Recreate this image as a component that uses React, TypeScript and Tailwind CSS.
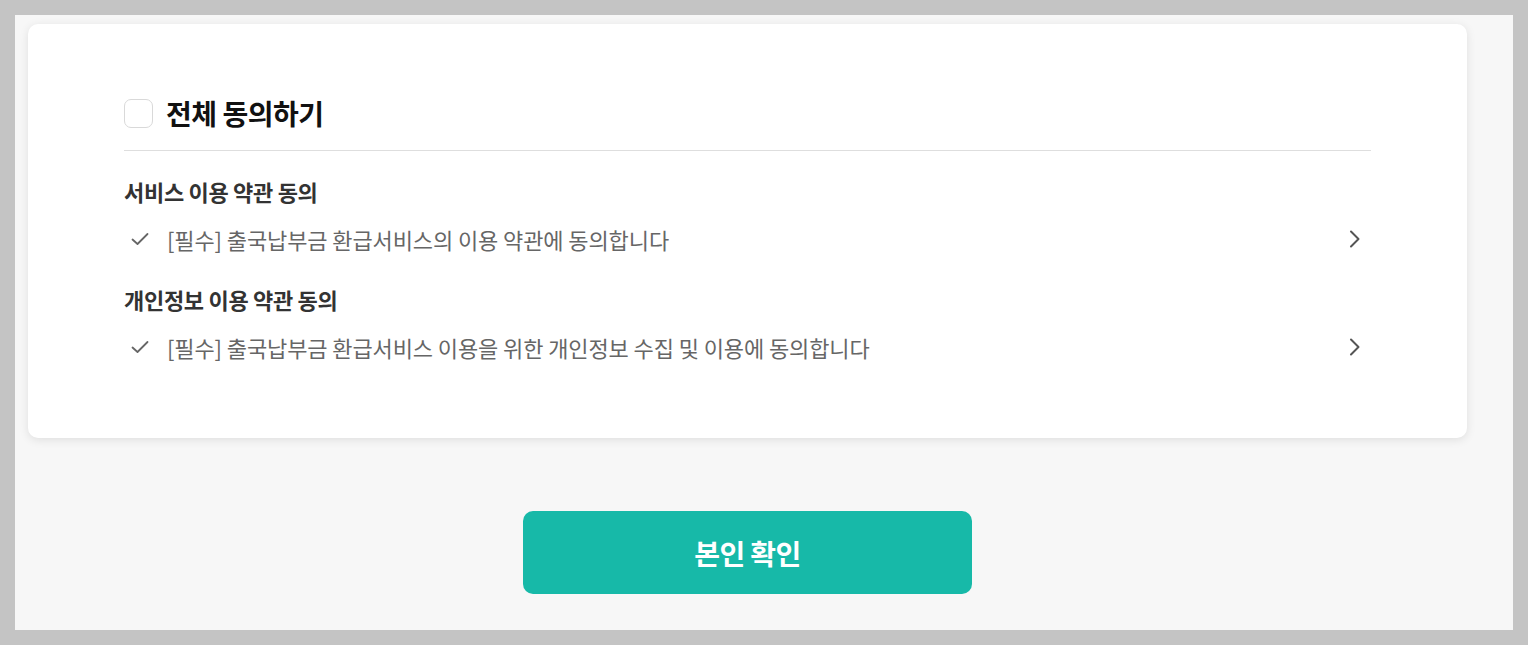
import React from "react";

const font = { fontFamily: '"Noto Sans CJK KR", "Noto Sans", sans-serif' };

function Check() {
  return (
    <svg width="20" height="20" viewBox="0 0 20 20" fill="none" className="shrink-0">
      <path d="M2.5 10.5 L7.5 15 L17.5 5" stroke="#666" strokeWidth="1.8" strokeLinecap="round" strokeLinejoin="round" />
    </svg>
  );
}

function Chevron() {
  return (
    <svg width="12" height="18" viewBox="0 0 12 18" fill="none" className="shrink-0">
      <path d="M2 1.5 L9.5 9 L2 16.5" stroke="#555" strokeWidth="2" strokeLinecap="round" strokeLinejoin="round" />
    </svg>
  );
}

function Item({ text }: { text: string }) {
  return (
    <div className="flex h-[26px] items-center">
      <div className="ml-[6px] flex w-[37px] items-center">
        <Check />
      </div>
      <div className="flex-1 text-[22px] leading-[26px] tracking-[-0.1px] text-[#666]">{text}</div>
      <div className="mr-[10px]">
        <Chevron />
      </div>
    </div>
  );
}

export default function App() {
  return (
    <div className="h-[645px] w-[1528px] bg-[#c4c4c4] p-[15px]" style={font}>
      <div className="h-[615px] bg-[#f7f7f7] pl-[13px] pr-[46px] pt-[9px]">
        <div className="flex w-[1439px] flex-col items-center">
          <div className="h-[414px] w-full rounded-[10px] bg-white px-[96px] pt-[75px] shadow-[0_2px_10px_rgba(0,0,0,0.10)]">
            <div className="flex h-[29px] items-center">
              <div className="h-[29px] w-[29px] rounded-[7px] border border-[#d9d9d9] bg-white" />
              <div className="ml-[13px] text-[28px] font-bold leading-[29px] tracking-[-0.5px] text-[#111]">
                전체 동의하기
              </div>
            </div>
            <div className="mt-[22px] h-px bg-[#dedede]" />
            <div className="mt-[27px] text-[22px] font-bold leading-[26px] tracking-[-0.3px] text-[#333]">
              서비스 이용 약관 동의
            </div>
            <div className="mt-[22px]">
              <Item text="[필수] 출국납부금 환급서비스의 이용 약관에 동의합니다" />
            </div>
            <div className="mt-[34px] text-[22px] font-bold leading-[26px] tracking-[-0.3px] text-[#333]">
              개인정보 이용 약관 동의
            </div>
            <div className="mt-[22px]">
              <Item text="[필수] 출국납부금 환급서비스 이용을 위한 개인정보 수집 및 이용에 동의합니다" />
            </div>
          </div>
          <button className="mt-[73px] flex h-[83px] w-[449px] items-center justify-center rounded-[10px] bg-[#17b9a8] text-[28px] font-bold tracking-[-0.6px] text-white">
            본인 확인
          </button>
        </div>
      </div>
    </div>
  );
}
